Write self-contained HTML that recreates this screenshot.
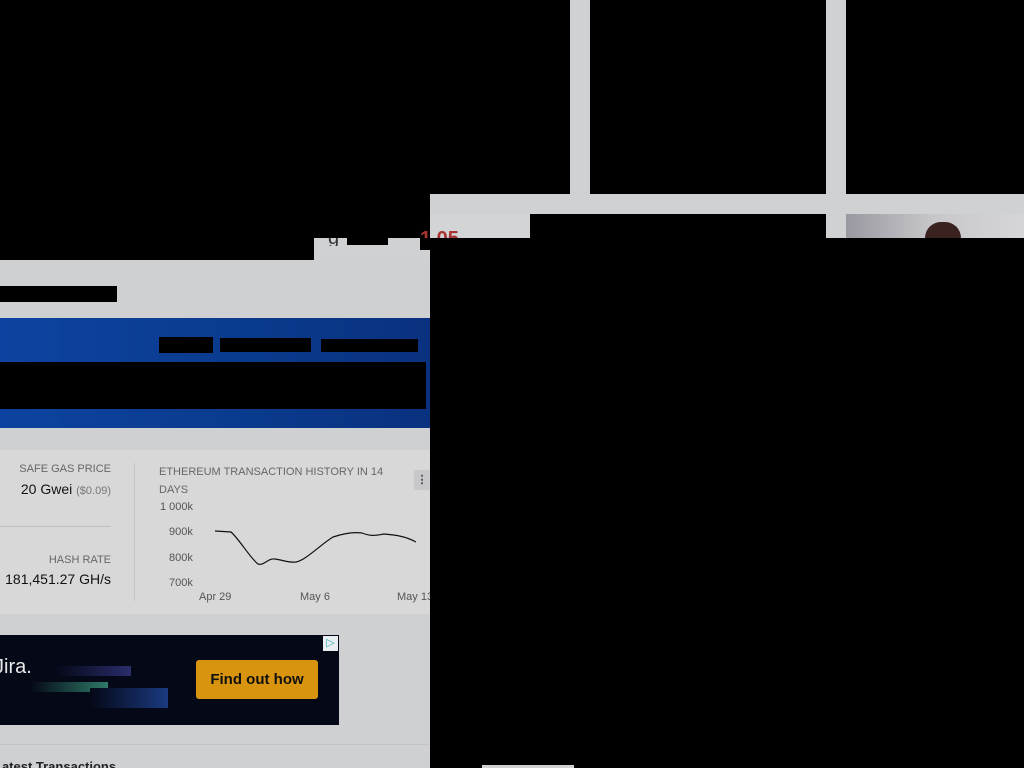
<!DOCTYPE html>
<html><head><meta charset="utf-8"><style>
*{margin:0;padding:0;box-sizing:border-box}
html,body{width:1024px;height:768px;overflow:hidden}
body{background:#000;position:relative;font-family:"Liberation Sans",sans-serif}
.a{position:absolute}
.g{background:#d0d1d3}
.k{background:#000}
</style></head><body>
<div class="a g" style="left:570px;top:0;width:20px;height:214px"></div>
<div class="a g" style="left:826px;top:0;width:20px;height:238px"></div>
<div class="a g" style="left:430px;top:194px;width:594px;height:20px"></div>
<div class="a g" style="left:430px;top:214px;width:100px;height:24px;background:#d3d4d6"></div>
<div class="a" style="left:420px;top:230px;width:60px;height:8px;overflow:hidden"><div style="font-size:20px;color:#a33;font-weight:bold;line-height:20px;margin-top:-1px">1.05</div></div>
<div class="a" style="left:846px;top:214px;width:178px;height:24px;background:linear-gradient(90deg,#9a98a0,#c8c8cc 50%,#d6d6d8)"></div>
<div class="a" style="left:925px;top:222px;width:36px;height:16px;border-radius:18px 18px 0 0;background:#3a2220"></div>
<div class="a g" style="left:314px;top:238px;width:106px;height:22px"></div>
<div class="a g" style="left:420px;top:250px;width:10px;height:10px"></div>
<div class="a" style="left:328px;top:238px;width:18px;height:8px;overflow:hidden"><div style="font-size:20px;color:#333;line-height:20px;margin-top:-10px">g</div></div>
<div class="a k" style="left:347px;top:238px;width:41px;height:7px"></div>
<div class="a g" style="left:0;top:260px;width:430px;height:508px;background:#cfd0d2"></div>
<div class="a k" style="left:0;top:286px;width:117px;height:16px"></div>
<div class="a" style="left:0;top:318px;width:430px;height:110px;background:linear-gradient(90deg,#0d43a0,#0a3a8c 60%,#0a3180)"></div>
<div class="a k" style="left:159px;top:337px;width:54px;height:16px"></div>
<div class="a k" style="left:220px;top:338px;width:91px;height:14px"></div>
<div class="a k" style="left:321px;top:339px;width:97px;height:13px"></div>
<div class="a k" style="left:0;top:362px;width:426px;height:47px"></div>
<div class="a" style="left:0;top:450px;width:430px;height:164px;background:#d8d8d9"></div>
<div class="a" style="right:913px;top:463px;font-size:11px;color:#666;white-space:nowrap">SAFE GAS PRICE</div>
<div class="a" style="right:913px;top:481px;font-size:14px;color:#111;white-space:nowrap">20 Gwei <span style="font-size:11px;color:#777">($0.09)</span></div>
<div class="a" style="left:0;top:526px;width:111px;height:1px;background:#c0c0c2"></div>
<div class="a" style="right:913px;top:554px;font-size:11px;color:#666;white-space:nowrap">HASH RATE</div>
<div class="a" style="right:913px;top:571px;font-size:14px;color:#111;white-space:nowrap">181,451.27 GH/s</div>
<div class="a" style="left:134px;top:463px;width:1px;height:138px;background:#c4c4c6"></div>
<div class="a" style="left:159px;top:463px;width:245px;font-size:11px;color:#666;line-height:18px">ETHEREUM TRANSACTION HISTORY IN 14 DAYS</div>
<div class="a" style="left:414px;top:470px;width:16px;height:20px;background:#c8c8ca;color:#444;font-size:11px;text-align:center;line-height:20px;font-weight:bold">⋮</div>
<div class="a" style="left:160px;top:501px;font-size:11px;color:#555">1 000k</div>
<div class="a" style="left:169px;top:526px;font-size:11px;color:#555">900k</div>
<div class="a" style="left:169px;top:552px;font-size:11px;color:#555">800k</div>
<div class="a" style="left:169px;top:577px;font-size:11px;color:#555">700k</div>
<div class="a" style="left:199px;top:591px;font-size:11px;color:#555">Apr 29</div>
<div class="a" style="left:300px;top:591px;font-size:11px;color:#555">May 6</div>
<div class="a" style="left:397px;top:591px;font-size:11px;color:#555;white-space:nowrap;width:33px;overflow:hidden">May 13</div>
<svg class="a" style="left:0;top:0" width="430" height="768"><path d="M215 531 L231 532 C240 540 250 558 258 564 C264 566 268 558 275 559 C283 560 288 563 296 562 C306 560 320 545 333 537 C345 533 355 532 362 533 C370 536 374 536 384 534 C395 535 405 536 416 542" fill="none" stroke="#111" stroke-width="1.2"/></svg>
<div class="a" style="left:0;top:635px;width:339px;height:90px;background:#050817"></div>
<div class="a" style="left:-6px;top:656px;font-size:20px;color:#e8e8ea">Jira.</div>
<div class="a" style="left:55px;top:666px;width:76px;height:10px;background:linear-gradient(90deg,#050817,#2a2d6a)"></div>
<div class="a" style="left:30px;top:682px;width:78px;height:10px;background:linear-gradient(90deg,#050817,#2e7a68)"></div>
<div class="a" style="left:90px;top:688px;width:78px;height:20px;background:linear-gradient(90deg,#050817,#1a3a80)"></div>
<div class="a" style="left:196px;top:660px;width:122px;height:39px;background:#d9940f;border-radius:3px;color:#111;font-weight:bold;font-size:15px;text-align:center;line-height:39px">Find out how</div>
<div class="a" style="left:323px;top:636px;width:15px;height:15px;background:#e8eef2;color:#3aa;font-size:11px;text-align:center;line-height:15px">▷</div>
<div class="a" style="left:0;top:744px;width:430px;height:1px;background:#c4c4c6"></div>
<div class="a" style="left:-6px;top:759px;font-size:13px;font-weight:bold;color:#222">Latest Transactions</div>
<div class="a k" style="left:430px;top:238px;width:594px;height:530px"></div>
<div class="a g" style="left:482px;top:765px;width:92px;height:3px"></div>
</body></html>
